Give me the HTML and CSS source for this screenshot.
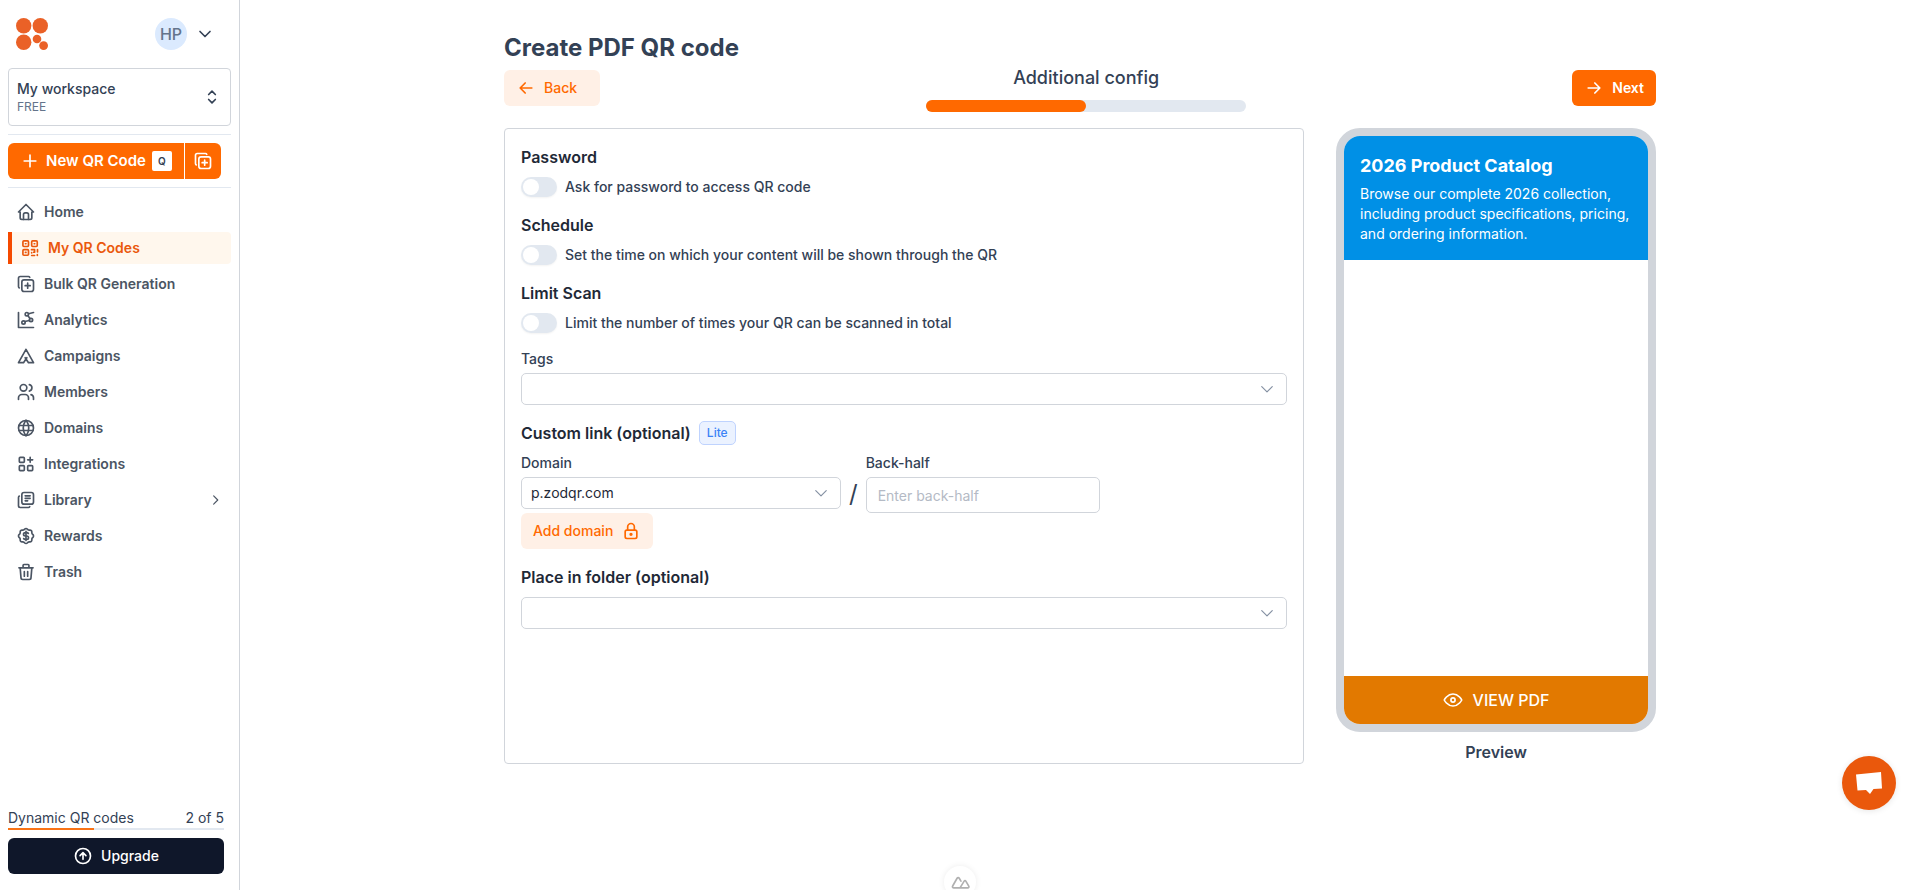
FILE: index.html
```html
<!DOCTYPE html>
<html lang="en">
  <head>
    <meta charset="UTF-8" />
    <meta name="viewport" content="width=device-width, initial-scale=1.0" />
    <title>Create PDF QR code</title>
    <link rel="stylesheet" href="styles.css">
  </head>
  <body>
    <!-- Sidebar -->
    <aside class="sidebar">
      <div class="sidebar-top">
        <a href="#" aria-label="Dashboard">
          <svg class="logo" viewBox="0 0 32 32" width="32" height="32">
            <circle cx="7.7" cy="7.7" r="7.7" />
            <circle cx="24.3" cy="7.7" r="7.7" />
            <circle cx="7.7" cy="24.3" r="7.7" />
            <circle cx="21" cy="21" r="4.3" />
            <circle cx="27.6" cy="27.6" r="4.4" />
          </svg>
        </a>
        <button class="user-menu" type="button" aria-label="Account menu">
          <span class="avatar">HP</span>
          <svg class="icon" viewBox="0 0 24 24"><path d="m6 9 6 6 6-6" /></svg>
        </button>
      </div>

      <button class="workspace" type="button">
        <span class="workspace-text">
          <span class="workspace-name">My workspace</span>
          <span class="workspace-plan">FREE</span>
        </span>
        <svg class="icon" viewBox="0 0 24 24"><path d="m8 9 4-4 4 4M16 15l-4 4-4-4" /></svg>
      </button>

      <hr class="line" />

      <div class="new-code">
        <button class="new-code-main" type="button">
          <svg class="icon" viewBox="0 0 24 24"><path d="M12 5v14M5 12h14" /></svg>
          New QR Code
          <kbd class="key">Q</kbd>
        </button>
        <button class="new-code-bulk" type="button" aria-label="Bulk QR codes">
          <svg class="icon" viewBox="0 0 24 24"><rect x="7" y="7" width="14" height="14" rx="2.7" /><path d="M4 16.7A2 2 0 0 1 3 15V5c0-1.1.9-2 2-2h10c.75 0 1.16.39 1.5 1M11 14h6M14 11v6" /></svg>
        </button>
      </div>

      <hr class="line" />

      <nav class="nav">
        <a class="nav-item" href="#">
          <svg class="icon" viewBox="0 0 24 24"><path d="M5 12H3l9-9 9 9h-2M5 12v7a2 2 0 0 0 2 2h10a2 2 0 0 0 2-2v-7" /><path d="M9 21v-6a2 2 0 0 1 2-2h2a2 2 0 0 1 2 2v6" /></svg>
          Home
        </a>
        <a class="nav-item active" href="#">
          <svg class="icon" viewBox="0 0 24 24"><rect x="3.5" y="3.5" width="6.7" height="6.7" rx="1.2" /><rect x="14" y="3.5" width="6.7" height="6.7" rx="1.2" /><rect x="3.5" y="14" width="6.7" height="6.7" rx="1.2" /><path d="M6.5 6.9h.7M17 6.9h.7M6.5 17.300h.7M13.800 14h3.700v3h-1M21 13.800v3M14 17.500v.5M14 21h3.500M20.800 20v1" /></svg>
          My QR Codes
        </a>
        <a class="nav-item" href="#">
          <svg class="icon" viewBox="0 0 24 24"><rect x="7" y="7" width="14" height="14" rx="2.7" /><path d="M4 16.7A2 2 0 0 1 3 15V5c0-1.1.9-2 2-2h10c.75 0 1.16.39 1.5 1M11 14h6M14 11v6" /></svg>
          Bulk QR Generation
        </a>
        <a class="nav-item" href="#">
          <svg class="icon" viewBox="0 0 24 24"><path d="M3 3v18h18" /><circle cx="9" cy="15" r="2" /><circle cx="13" cy="5" r="2" /><circle cx="18" cy="12" r="2" /><path d="m21 3-6 1.5M14.1 6.7l2.7 3.6M10.5 13.8l5.6-1.2" /></svg>
          Analytics
        </a>
        <a class="nav-item" href="#">
          <svg class="icon" viewBox="0 0 24 24"><path d="m11 14 4 6h6L12 4 3 20h6l4-6" /></svg>
          Campaigns
        </a>
        <a class="nav-item" href="#">
          <svg class="icon" viewBox="0 0 24 24"><circle cx="9" cy="7" r="4" /><path d="M3 21v-2a4 4 0 0 1 4-4h4a4 4 0 0 1 4 4v2M16 3.1a4 4 0 0 1 0 7.8M21 21v-2a4 4 0 0 0-3-3.9" /></svg>
          Members
        </a>
        <a class="nav-item" href="#">
          <svg class="icon" viewBox="0 0 24 24"><circle cx="12" cy="12" r="9" /><path d="M3.6 9h16.8M3.6 15h16.8M11.5 3a17 17 0 0 0 0 18M12.5 3a17 17 0 0 1 0 18" /></svg>
          Domains
        </a>
        <a class="nav-item" href="#">
          <svg class="icon" viewBox="0 0 24 24"><rect x="4" y="4" width="6" height="6" rx="1" /><rect x="4" y="14" width="6" height="6" rx="1" /><rect x="14" y="14" width="6" height="6" rx="1" /><path d="M14 7h6M17 4v6" /></svg>
          Integrations
        </a>
        <a class="nav-item" href="#">
          <svg class="icon" viewBox="0 0 24 24"><rect x="7" y="3" width="14" height="14" rx="2.7" /><path d="M4 7.3A2 2 0 0 0 3 9v10c0 1.1.9 2 2 2h10c.75 0 1.16-.39 1.5-1M11 7h6M11 10h6M11 13h3" /></svg>
          Library
          <svg class="icon small nav-arrow" viewBox="0 0 24 24"><path d="m8 5 7 7-7 7" /></svg>
        </a>
        <a class="nav-item" href="#">
          <svg class="icon" viewBox="0 0 24 24"><path d="M5 7.2A2.2 2.2 0 0 1 7.2 5h1a2.2 2.2 0 0 0 1.55-.64l.7-.7a2.2 2.2 0 0 1 3.12 0l.7.7c.41.41.97.64 1.55.64h1a2.2 2.2 0 0 1 2.2 2.2v1c0 .58.23 1.14.64 1.55l.7.7a2.2 2.2 0 0 1 0 3.12l-.7.7a2.2 2.2 0 0 0-.64 1.55v1a2.2 2.2 0 0 1-2.2 2.2h-1a2.2 2.2 0 0 0-1.55.64l-.7.7a2.2 2.2 0 0 1-3.12 0l-.7-.7a2.2 2.2 0 0 0-1.55-.64h-1A2.2 2.2 0 0 1 5 16.8v-1a2.2 2.2 0 0 0-.64-1.55l-.7-.7a2.2 2.2 0 0 1 0-3.12l.7-.7A2.2 2.2 0 0 0 5 8.2z" /><path d="M14.8 9a2 2 0 0 0-1.8-1h-2a2 2 0 1 0 0 4h2a2 2 0 1 1 0 4h-2a2 2 0 0 1-1.8-1M12 6.5v11" /></svg>
          Rewards
        </a>
        <a class="nav-item" href="#">
          <svg class="icon" viewBox="0 0 24 24"><path d="M3.5 7h17M10 11.5V17M14 11.5V17M5 7l1 12a2 2 0 0 0 2 2h8a2 2 0 0 0 2-2l1-12M8.5 7V4a1 1 0 0 1 1-1h5a1 1 0 0 1 1 1v3" /></svg>
          Trash
        </a>
      </nav>

      <div class="usage">
        <div class="usage-text">
          <span>Dynamic QR codes</span>
          <span>2 of 5</span>
        </div>
        <div class="usage-bar"><div class="usage-fill" style="width: 40%"></div></div>
        <button class="upgrade" type="button">
          <svg class="icon" viewBox="0 0 24 24"><circle cx="12" cy="12" r="9" /><path d="M12 16V8M8.5 11.5 12 8l3.5 3.5" /></svg>
          Upgrade
        </button>
      </div>
    </aside>

    <!-- Page content -->
    <main class="main">
      <div class="container">
        <h1 class="title">Create PDF QR code</h1>

        <div class="steps">
          <button class="btn btn-soft btn-back" type="button">
            <svg class="icon" viewBox="0 0 24 24"><path d="M19 12H5M11 6l-6 6 6 6" /></svg>
            Back
          </button>
          <div class="step">
            <div class="step-name">Additional config</div>
            <div class="step-bar"><div class="step-fill" style="width: 50%"></div></div>
          </div>
          <button class="btn btn-primary" type="button">
            <svg class="icon" viewBox="0 0 24 24"><path d="M5 12h14M13 6l6 6-6 6" /></svg>
            Next
          </button>
        </div>

        <div class="columns">
          <form class="card">
            <section class="option">
              <h2 class="heading">Password</h2>
              <label class="toggle">
                <input class="switch" type="checkbox" name="password" />
                Ask for password to access QR code
              </label>
            </section>
            <section class="option">
              <h2 class="heading">Schedule</h2>
              <label class="toggle">
                <input class="switch" type="checkbox" name="schedule" />
                Set the time on which your content will be shown through the QR
              </label>
            </section>
            <section class="option">
              <h2 class="heading">Limit Scan</h2>
              <label class="toggle">
                <input class="switch" type="checkbox" name="limit" />
                Limit the number of times your QR can be scanned in total
              </label>
            </section>

            <div class="field">
              <label for="tags">Tags</label>
              <div class="select">
                <select id="tags" name="tags"><option></option></select>
                <svg class="icon small" viewBox="0 0 24 24"><path d="m3 8 9 9 9-9" /></svg>
              </div>
            </div>

            <section class="option">
              <h2 class="heading">Custom link (optional) <span class="badge">Lite</span></h2>
              <div class="link-row">
                <div class="field domain">
                  <label for="domain">Domain</label>
                  <div class="select">
                    <select id="domain" name="domain"><option>p.zodqr.com</option></select>
                    <svg class="icon small" viewBox="0 0 24 24"><path d="m3 8 9 9 9-9" /></svg>
                  </div>
                  <button class="btn btn-soft add-domain" type="button">
                    Add domain
                    <svg class="icon" viewBox="0 0 24 24"><rect x="5" y="11" width="14" height="10" rx="2" /><path d="M8 11V7a4 4 0 1 1 8 0v4" /><circle cx="12" cy="16" r="1" /></svg>
                  </button>
                </div>
                <span class="slash">/</span>
                <div class="field">
                  <label for="back-half">Back-half</label>
                  <input class="input" id="back-half" name="back-half" type="text" placeholder="Enter back-half" />
                </div>
              </div>
            </section>

            <div class="option">
              <label class="heading" for="folder">Place in folder (optional)</label>
              <div class="select">
                <select id="folder" name="folder"><option></option></select>
                <svg class="icon small" viewBox="0 0 24 24"><path d="m3 8 9 9 9-9" /></svg>
              </div>
            </div>
          </form>

          <!-- Phone preview -->
          <div class="preview">
            <div class="phone">
              <div class="phone-header">
                <h3 class="phone-title">2026 Product Catalog</h3>
                <p class="phone-text">Browse our complete 2026 collection, including product specifications, pricing, and ordering information.</p>
              </div>
              <button class="view-pdf" type="button">
                <svg class="icon" viewBox="0 0 24 24"><circle cx="12" cy="12" r="2.5" /><path d="M1.500 12S5 4.800 12 4.800 22.500 12 22.500 12 19 19.200 12 19.200 1.500 12 1.500 12z" /></svg>
                VIEW PDF
              </button>
            </div>
            <div class="preview-label">Preview</div>
          </div>
        </div>
      </div>
    </main>

    <!-- Floating buttons -->
    <button class="chat" type="button" aria-label="Open chat">
      <svg viewBox="0 0 26 24" width="26" height="24"><path d="M0 3.5 25 1l1 16.5-8.500.5-3.500 5-4-4-8.500.5z" /></svg>
    </button>
    <button class="devtools" type="button" aria-label="Devtools">
      <svg class="icon" viewBox="0 0 24 24"><path d="M12 19H4.500c-1.200 0-1.900-1.200-1.300-2.200L8.500 7.500c.6-1 2-1 2.600 0l2 3.500M12 19l5-8c.5-.8 1.500-.8 2 0l3.500 6c.5.900 0 2-1.200 2z" /></svg>
    </button>
  </body>
</html>
```
FILE: styles.css
```css
* {
  box-sizing: border-box;
}

body {
  margin: 0;
  display: flex;
  min-height: 100vh;
  font-family: Inter, "Liberation Sans", sans-serif;
  font-size: 14px;
  line-height: 20px;
  color: #334155;
  background: #fff;
}

button,
input,
select {
  font: inherit;
  color: inherit;
}

button {
  margin: 0;
  padding: 0;
  border: none;
  background: none;
  cursor: pointer;
}

h1,
h2,
h3,
p {
  margin: 0;
}

.icon {
  width: 20px;
  height: 20px;
  flex-shrink: 0;
  fill: none;
  stroke: currentColor;
  stroke-width: 2;
  stroke-linecap: round;
  stroke-linejoin: round;
}

.icon.small {
  width: 14px;
  height: 14px;
}

/* Sidebar */
.sidebar {
  position: sticky;
  top: 0;
  display: flex;
  flex-direction: column;
  flex-shrink: 0;
  width: 240px;
  height: 100vh;
  padding: 0 8px 16px;
  border-right: 1px solid #d1d5db;
}

.sidebar-top {
  display: flex;
  align-items: center;
  justify-content: space-between;
  height: 68px;
  padding: 0 16px 0 8px;
}

.logo {
  display: block;
  fill: #ea6127;
}

.user-menu {
  display: flex;
  align-items: center;
  gap: 8px;
}

.avatar {
  width: 32px;
  height: 32px;
  border-radius: 50%;
  background: #dbeafe;
  color: #64748b;
  font-size: 16px;
  font-weight: 500;
  line-height: 32px;
}

.workspace {
  display: flex;
  align-items: center;
  justify-content: space-between;
  height: 58px;
  padding: 0 8px;
  border: 1px solid #d1d5db;
  border-radius: 4px;
  text-align: left;
}

.workspace-text {
  display: flex;
  flex-direction: column;
}

.workspace-name {
  font-weight: 500;
}

.workspace-plan {
  font-size: 12px;
  line-height: 16px;
  color: #64748b;
}

.line {
  width: 100%;
  margin: 8px 0;
  border: none;
  border-top: 1px solid #e2e8f0;
}

.new-code {
  display: flex;
  gap: 1px;
  color: #fff;
  font-size: 15px;
  font-weight: 600;
}

.new-code-main,
.new-code-bulk {
  display: flex;
  align-items: center;
  height: 36px;
  background: #ff6900;
}

.new-code-main {
  gap: 6px;
  padding: 0 12px;
  border-radius: 6px 0 0 6px;
}

.new-code-bulk {
  padding: 0 8px;
  border-radius: 0 6px 6px 0;
}

.key {
  width: 20px;
  border-radius: 2px;
  background: #fff;
  color: #334155;
  font-family: inherit;
  font-size: 10px;
  font-weight: 600;
}

.nav {
  display: flex;
  flex-direction: column;
  gap: 4px;
}

.nav-item {
  display: flex;
  align-items: center;
  gap: 8px;
  height: 32px;
  padding: 0 8px;
  border-radius: 4px;
  color: #4b5563;
  font-weight: 600;
  text-decoration: none;
}

.nav-item.active {
  border-left: 4px solid #f54a00;
  border-radius: 0 4px 4px 0;
  background: #fff7ed;
  color: #ea580c;
}

.nav-arrow {
  margin-left: auto;
}

.usage {
  margin-top: auto;
  padding-right: 7px;
}

.usage-text {
  display: flex;
  justify-content: space-between;
}

.usage-bar {
  height: 2px;
  background: #e2e8f0;
}

.usage-fill {
  height: 100%;
  background: #f97316;
}

.upgrade {
  display: flex;
  align-items: center;
  justify-content: center;
  gap: 8px;
  width: 100%;
  height: 36px;
  margin-top: 8px;
  border-radius: 6px;
  background: #0f172a;
  color: #fff;
  font-weight: 500;
}

/* Content */
.main {
  flex: 1;
  padding: 32px 16px;
}

.container {
  max-width: 1152px;
  margin: 0 auto;
}

.title {
  font-size: 24px;
  font-weight: 700;
  line-height: 32px;
}

.steps {
  display: flex;
  align-items: center;
  justify-content: space-between;
  margin-bottom: 16px;
}

.step {
  width: 320px;
}

.step-name {
  margin-bottom: 8px;
  font-size: 18px;
  font-weight: 500;
  line-height: 28px;
  text-align: center;
}

.step-bar {
  height: 12px;
  border-radius: 6px;
  background: #e2e8f0;
}

.step-fill {
  height: 100%;
  border-radius: 6px;
  background: #ff6900;
}

.btn {
  display: flex;
  align-items: center;
  gap: 8px;
  height: 36px;
  padding: 0 12px;
  border-radius: 6px;
  font-weight: 500;
}

.btn-soft {
  background: #fff0e6;
  color: #ff6900;
}

.btn-back {
  width: 96px;
}

.btn-primary {
  background: #ff6900;
  color: #fff;
  font-weight: 600;
}

.columns {
  display: flex;
  gap: 32px;
}

.card {
  display: flex;
  flex: 1;
  flex-direction: column;
  gap: 16px;
  padding: 16px;
  border: 1px solid #d1d5db;
  border-radius: 4px;
}

.option {
  display: flex;
  flex-direction: column;
  gap: 8px;
}

.heading {
  display: flex;
  align-items: center;
  gap: 8px;
  color: #1f2937;
  font-size: 16px;
  font-weight: 600;
  line-height: 24px;
}

.badge {
  padding: 3px 7px;
  border: 1px solid #bfd3fe;
  border-radius: 5px;
  background: #ebf2ff;
  color: #3b82f6;
  font-size: 12px;
  font-weight: 500;
  line-height: 16px;
}

.toggle {
  display: flex;
  align-items: center;
  gap: 8px;
  font-weight: 500;
}

.switch {
  appearance: none;
  width: 36px;
  height: 20px;
  margin: 0;
  padding: 2px;
  border-radius: 10px;
  background: #e2e8f0;
  box-shadow: 0 1px 2px rgba(0, 0, 0, 0.05);
}

.switch::before {
  content: "";
  display: block;
  width: 16px;
  height: 16px;
  border-radius: 50%;
  background: #fff;
}

.switch:checked {
  background: #ff6900;
}

.switch:checked::before {
  margin-left: auto;
}

.field {
  display: flex;
  flex-direction: column;
  gap: 4px;
  font-weight: 500;
}

/* the arrow shares the grid cell of the select */
.select {
  display: grid;
  align-items: center;
}

.select select,
.select .icon {
  grid-area: 1 / 1;
}

.select select {
  appearance: none;
  height: 32px;
  padding: 0 9px;
  border: 1px solid #d1d5db;
  border-radius: 5px;
  background: #fff;
  color: #1f2937;
  font-weight: 400;
}

.select .icon {
  justify-self: end;
  margin-right: 13px;
  color: #8591a3;
  pointer-events: none;
}

.link-row {
  display: flex;
  gap: 8px;
}

.domain {
  width: 320px;
}

.add-domain {
  align-self: flex-start;
}

.slash {
  padding-top: 24px;
  font-size: 24px;
  line-height: 34px;
}

.input {
  width: 234px;
  height: 36px;
  padding: 0 11px;
  border: 1px solid #d1d5db;
  border-radius: 5px;
  font-weight: 400;
}

.input::placeholder {
  color: #b4bac5;
}

/* Phone preview */
.preview {
  width: 320px;
}

.phone {
  display: flex;
  flex-direction: column;
  justify-content: space-between;
  height: 604px;
  overflow: hidden;
  border: 8px solid #d1d5db;
  border-radius: 24px;
}

.phone-header {
  padding: 16px;
  background: #0090e6;
  color: #fff;
}

.phone-title {
  margin-bottom: 4px;
  font-size: 18px;
  font-weight: 700;
  line-height: 28px;
}

.view-pdf {
  display: flex;
  align-items: center;
  justify-content: center;
  gap: 10px;
  height: 48px;
  background: #e27900;
  color: #fff;
  font-size: 16px;
  font-weight: 500;
}

.preview-label {
  margin-top: 8px;
  font-size: 16px;
  font-weight: 600;
  line-height: 24px;
  text-align: center;
}

/* Floating buttons */
.chat {
  position: fixed;
  right: 24px;
  bottom: 80px;
  display: grid;
  place-items: center;
  width: 54px;
  height: 54px;
  border-radius: 50%;
  background: #ea580c;
  box-shadow: 0 1px 6px rgba(0, 0, 0, 0.1);
}

.chat svg {
  fill: #fff;
}

.devtools {
  position: fixed;
  bottom: -8px;
  left: 50%;
  display: grid;
  place-items: center;
  width: 32px;
  height: 32px;
  margin-left: -16px;
  border-radius: 50%;
  background: #fff;
  box-shadow: 0 0 6px rgba(0, 0, 0, 0.08);
  color: #b0b0b0;
}
```
